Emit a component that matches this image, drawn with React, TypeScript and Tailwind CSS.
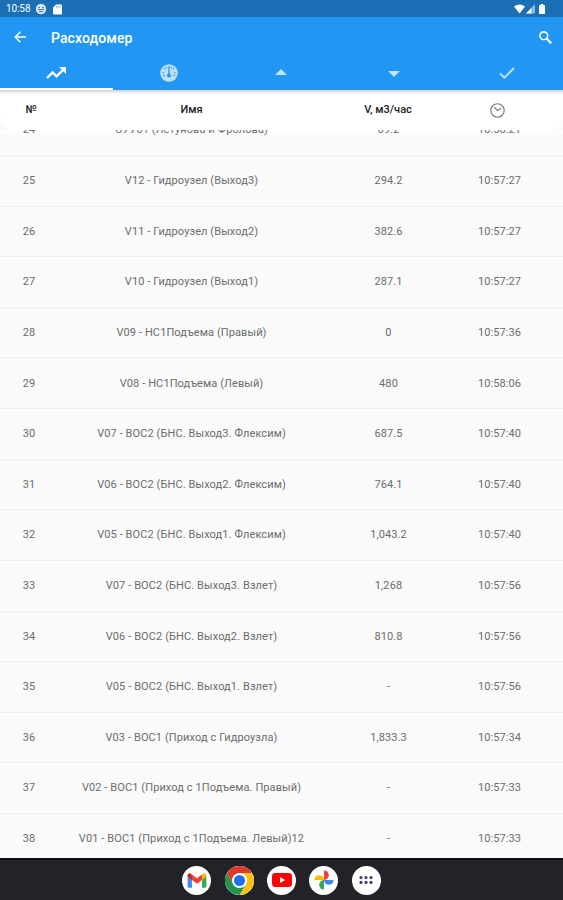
type Row = {
  id: number;
  name: string;
  value: string;
  time: string;
};

const rows: Row[] = [
  { id: 24, name: "ЭУУ01 (Летунова и Фролова)", value: "69.2", time: "10:58:21" },
  { id: 25, name: "V12 - Гидроузел (Выход3)", value: "294.2", time: "10:57:27" },
  { id: 26, name: "V11 - Гидроузел (Выход2)", value: "382.6", time: "10:57:27" },
  { id: 27, name: "V10 - Гидроузел (Выход1)", value: "287.1", time: "10:57:27" },
  { id: 28, name: "V09 - НС1Подъема (Правый)", value: "0", time: "10:57:36" },
  { id: 29, name: "V08 - НС1Подъема (Левый)", value: "480", time: "10:58:06" },
  { id: 30, name: "V07 - ВОС2 (БНС. Выход3. Флексим)", value: "687.5", time: "10:57:40" },
  { id: 31, name: "V06 - ВОС2 (БНС. Выход2. Флексим)", value: "764.1", time: "10:57:40" },
  { id: 32, name: "V05 - ВОС2 (БНС. Выход1. Флексим)", value: "1,043.2", time: "10:57:40" },
  { id: 33, name: "V07 - ВОС2 (БНС. Выход3. Взлет)", value: "1,268", time: "10:57:56" },
  { id: 34, name: "V06 - ВОС2 (БНС. Выход2. Взлет)", value: "810.8", time: "10:57:56" },
  { id: 35, name: "V05 - ВОС2 (БНС. Выход1. Взлет)", value: "-", time: "10:57:56" },
  { id: 36, name: "V03 - ВОС1 (Приход с Гидроузла)", value: "1,833.3", time: "10:57:34" },
  { id: 37, name: "V02 - ВОС1 (Приход с 1Подъема. Правый)", value: "-", time: "10:57:33" },
  { id: 38, name: "V01 - ВОС1 (Приход с 1Подъема. Левый)12", value: "-", time: "10:57:33" },
];

const StatusBar = () => (
  <div className="flex h-[17px] shrink-0 items-center bg-[#1a6fb5] pt-px pr-[18px] pl-[6px] text-white">
    <span className="w-[25px] text-[10px] leading-none tracking-[-0.1px]">10:58</span>
    <svg className="ml-[4px] h-[12px] w-[12px]" viewBox="0 0 12 12">
      <circle cx="6" cy="6" r="5.2" fill="#fff" fillOpacity="0.85" />
      <path d="M3 4.6h2M7 4.6h2M2.6 6.6h6.8M4 8.6h4" stroke="#1a6fb5" strokeWidth="0.9" />
    </svg>
    <svg className="ml-[6px] h-[11px] w-[9px]" viewBox="0 0 9 11">
      <path d="M3 .5h5a1 1 0 0 1 1 1v8a1 1 0 0 1-1 1H1a1 1 0 0 1-1-1v-6z" fill="#fff" />
      <path d="M3.5 2v1.6M5.2 2v1.6M6.9 2v1.6" stroke="#1a6fb5" strokeWidth="0.6" />
    </svg>
    <svg className="ml-auto h-[10px] w-[11px]" viewBox="0 0 11 10">
      <path d="M0 2.6Q5.5-1.6 11 2.6L5.5 9.6z" fill="#fff" />
    </svg>
    <svg className="ml-[1px] h-[10px] w-[9px]" viewBox="0 0 9 10">
      <path d="M9 0v9.6H0z" fill="#fff" fillOpacity="0.5" />
      <path d="M5.4 4v5.6H0z" fill="#fff" />
    </svg>
    <svg className="ml-[4px] h-[10px] w-[6px]" viewBox="0 0 6 10">
      <path d="M1.8 0h2.4v1H5.4l.6.6v7.8l-.6.6H.6L0 9.4V1.6L.6 1h1.2z" fill="#fff" />
    </svg>
  </div>
);

const TitleBar = () => (
  <div className="flex h-[40px] shrink-0 items-center pr-[11px] pl-[14px] text-white">
    <svg className="h-[12px] w-[12px]" viewBox="0 0 12 12" fill="none" stroke="currentColor" strokeWidth="1.6">
      <path d="M12 6H1.4M6.4.8L1.2 6l5.2 5.2" />
    </svg>
    <h1 className="ml-[25px] pt-px text-[14px] leading-none font-medium tracking-[0.1px]">Расходомер</h1>
    <svg className="ml-auto h-[13px] w-[13px]" viewBox="0 0 13 13" fill="none" stroke="currentColor">
      <circle cx="4.8" cy="4.8" r="3.9" strokeWidth="1.6" />
      <path d="M7.8 7.8l4.4 4.4" strokeWidth="2" />
    </svg>
  </div>
);

const Tabs = () => (
  <div className="grid h-[33px] shrink-0 grid-cols-5 text-white">
    <div className="flex items-center justify-center border-b-2 border-white">
      <svg className="h-[12px] w-[20px]" viewBox="0 0 20 12">
        <path d="M1 11l5.6-5.6 4 4L17.4 2.6" fill="none" stroke="#fff" strokeWidth="2.4" />
        <path d="M13 0h7v7z" fill="#fff" />
      </svg>
    </div>
    <div className="flex items-center justify-center pb-[2px]">
      <svg className="h-[18px] w-[18px]" viewBox="0 0 18 18">
        <circle cx="9" cy="9" r="8.8" fill="#bfe0fc" />
        <g stroke="#2196f3" strokeWidth="1.3" strokeLinecap="round" fill="none">
          <path d="M9 2.6v8M4.6 4.6l.3.3M13.4 4.6l-.3.3M2.9 8.8h.5M14.6 8.8h.5M6.5 3.3l.1.3M11.5 3.3l-.1.3M3.8 11.6l.4-.2M14.2 11.6l-.4-.2" />
        </g>
        <circle cx="9" cy="11.6" r="2" fill="#2196f3" />
      </svg>
    </div>
    <div className="flex items-center justify-center pb-[3px]">
      <svg className="h-[6px] w-[12px]" viewBox="0 0 12 6">
        <path d="M6 0l6 6H0z" fill="#c4e2fc" />
      </svg>
    </div>
    <div className="flex items-center justify-center">
      <svg className="h-[6px] w-[12px]" viewBox="0 0 12 6">
        <path d="M0 0h12L6 6z" fill="#c4e2fc" />
      </svg>
    </div>
    <div className="flex items-center justify-center pb-[2px]">
      <svg className="h-[12px] w-[16px]" viewBox="0 0 16 12">
        <path d="M1 6.4l4.4 4.3L15 1" fill="none" stroke="#c8e5fd" strokeWidth="1.8" />
      </svg>
    </div>
  </div>
);

const TableHeader = () => (
  <div className="shrink-0 bg-[#fafafa]">
    <div className="grid h-[40px] grid-cols-[58px_267px_126px_97px] items-center rounded-b-[14px] bg-white text-center text-[11px] font-medium text-[#222] shadow-[inset_0_4px_3px_-2px_#00000030]">
      <span className="pt-px pl-[4px]">№</span>
      <span className="pt-px">Имя</span>
      <span className="pt-px">V, м3/час</span>
      <svg className="mx-auto h-[15px] w-[15px] -translate-x-0.5" viewBox="0 0 15 15" fill="none" stroke="#777" strokeWidth="1.1">
        <circle cx="7.5" cy="7.5" r="6.7" />
        <path d="M4.2 4.2l3.3 3.3 3.6-2.2" />
      </svg>
    </div>
  </div>
);

const TableBody = () => (
  <div className="min-h-0 flex-1 overflow-hidden bg-[linear-gradient(#ffffff,#fafafa_6px)]">
    {/* list is scrolled half a row past its start */}
    <div className="-mt-[24.6px]">
      {rows.map((row) => (
        <div
          key={row.id}
          className="grid h-[50.62px] grid-cols-[58px_267px_126px_97px] items-center border-b border-[#f0f0f0] pt-px text-center text-[11px] tracking-[0.1px] whitespace-nowrap text-[#6c6c6c]"
        >
          <span>{row.id}</span>
          <span>{row.name}</span>
          <span className="pl-px">{row.value}</span>
          <span>{row.time}</span>
        </div>
      ))}
    </div>
  </div>
);

const Gmail = () => (
  <svg className="h-[15px] w-[20px]" viewBox="0 0 20 16">
    <path d="M0 3v11.4A1.3 1.3 0 0 0 1.3 15.7H4.6V6z" fill="#4285f4" />
    <path d="M20 3v11.4a1.3 1.3 0 0 1-1.3 1.3H15.4V6z" fill="#34a853" />
    <path d="M15.4 2v5.4L20 4V2.4C20 .4 17.8-.4 16.3.8z" fill="#fbbc04" />
    <path d="M4.6 2v5.4L0 4V2.4C0 .4 2.2-.4 3.7.8z" fill="#c5221f" />
    <path d="M4.6 7.4V1.5L10 5.6l5.4-4.1v5.9L10 11.4z" fill="#ea4335" />
  </svg>
);

const Chrome = () => (
  <svg className="h-[29px] w-[29px]" viewBox="0 0 48 48">
    <circle cx="24" cy="24" r="24" fill="#fff" />
    <path d="M3.2 12A24 24 0 0 1 44.8 12H24A12 12 0 0 0 13.6 30z" fill="#db3a2c" />
    <path d="M44.8 12A24 24 0 0 1 24 48L34.4 30A12 12 0 0 0 24 12z" fill="#fbc116" />
    <path d="M24 48A24 24 0 0 1 3.2 12L13.6 30A12 12 0 0 0 34.4 30z" fill="#23944a" />
    <circle cx="24" cy="24" r="12" fill="#fff" />
    <circle cx="24" cy="24" r="9.2" fill="#1a73e8" />
  </svg>
);

const YouTube = () => (
  <svg className="h-[14px] w-[20px]" viewBox="0 0 20 14">
    <rect width="20" height="14" rx="3.4" fill="#f00" />
    <path d="M8 4l5.2 3L8 10z" fill="#fff" />
  </svg>
);

const Photos = () => (
  <svg className="h-[20px] w-[20px]" viewBox="0 0 20 20">
    <path d="M10 10V.4a4.8 4.8 0 0 1 0 9.6z" fill="#ea4335" />
    <path d="M10 10h9.6a4.8 4.8 0 0 1-9.6 0z" fill="#4285f4" />
    <path d="M10 10v9.6a4.8 4.8 0 0 1 0-9.6z" fill="#34a853" />
    <path d="M10 10H.4a4.8 4.8 0 0 1 9.6 0z" fill="#fbbc04" />
  </svg>
);

const AllApps = () => (
  <svg className="h-[8px] w-[14px]" viewBox="0 0 14 8">
    {[2, 7, 12].map((x) => (
      <g key={x} fill="#3f3f72">
        <circle cx={x} cy="1.6" r="1.6" />
        <circle cx={x} cy="6.4" r="1.6" />
      </g>
    ))}
  </svg>
);

const dock = [Gmail, Chrome, YouTube, Photos, AllApps];

const Dock = () => (
  <div className="flex h-[42px] shrink-0 items-center justify-center gap-[13.3px] border-t-2 border-[#0d0d0f] bg-[#222327]">
    {dock.map((Icon, i) => (
      <div key={i} className="flex h-[29px] w-[29px] items-center justify-center rounded-full bg-white">
        <Icon />
      </div>
    ))}
  </div>
);

const App = () => (
  <div className="flex h-[900px] w-[563px] flex-col overflow-hidden bg-[#fafafa] font-[Roboto,sans-serif]">
    <StatusBar />
    <div className="flex shrink-0 flex-col bg-[#2196f3]">
      <TitleBar />
      <Tabs />
    </div>
    <TableHeader />
    <TableBody />
    <Dock />
  </div>
);

export default App;
